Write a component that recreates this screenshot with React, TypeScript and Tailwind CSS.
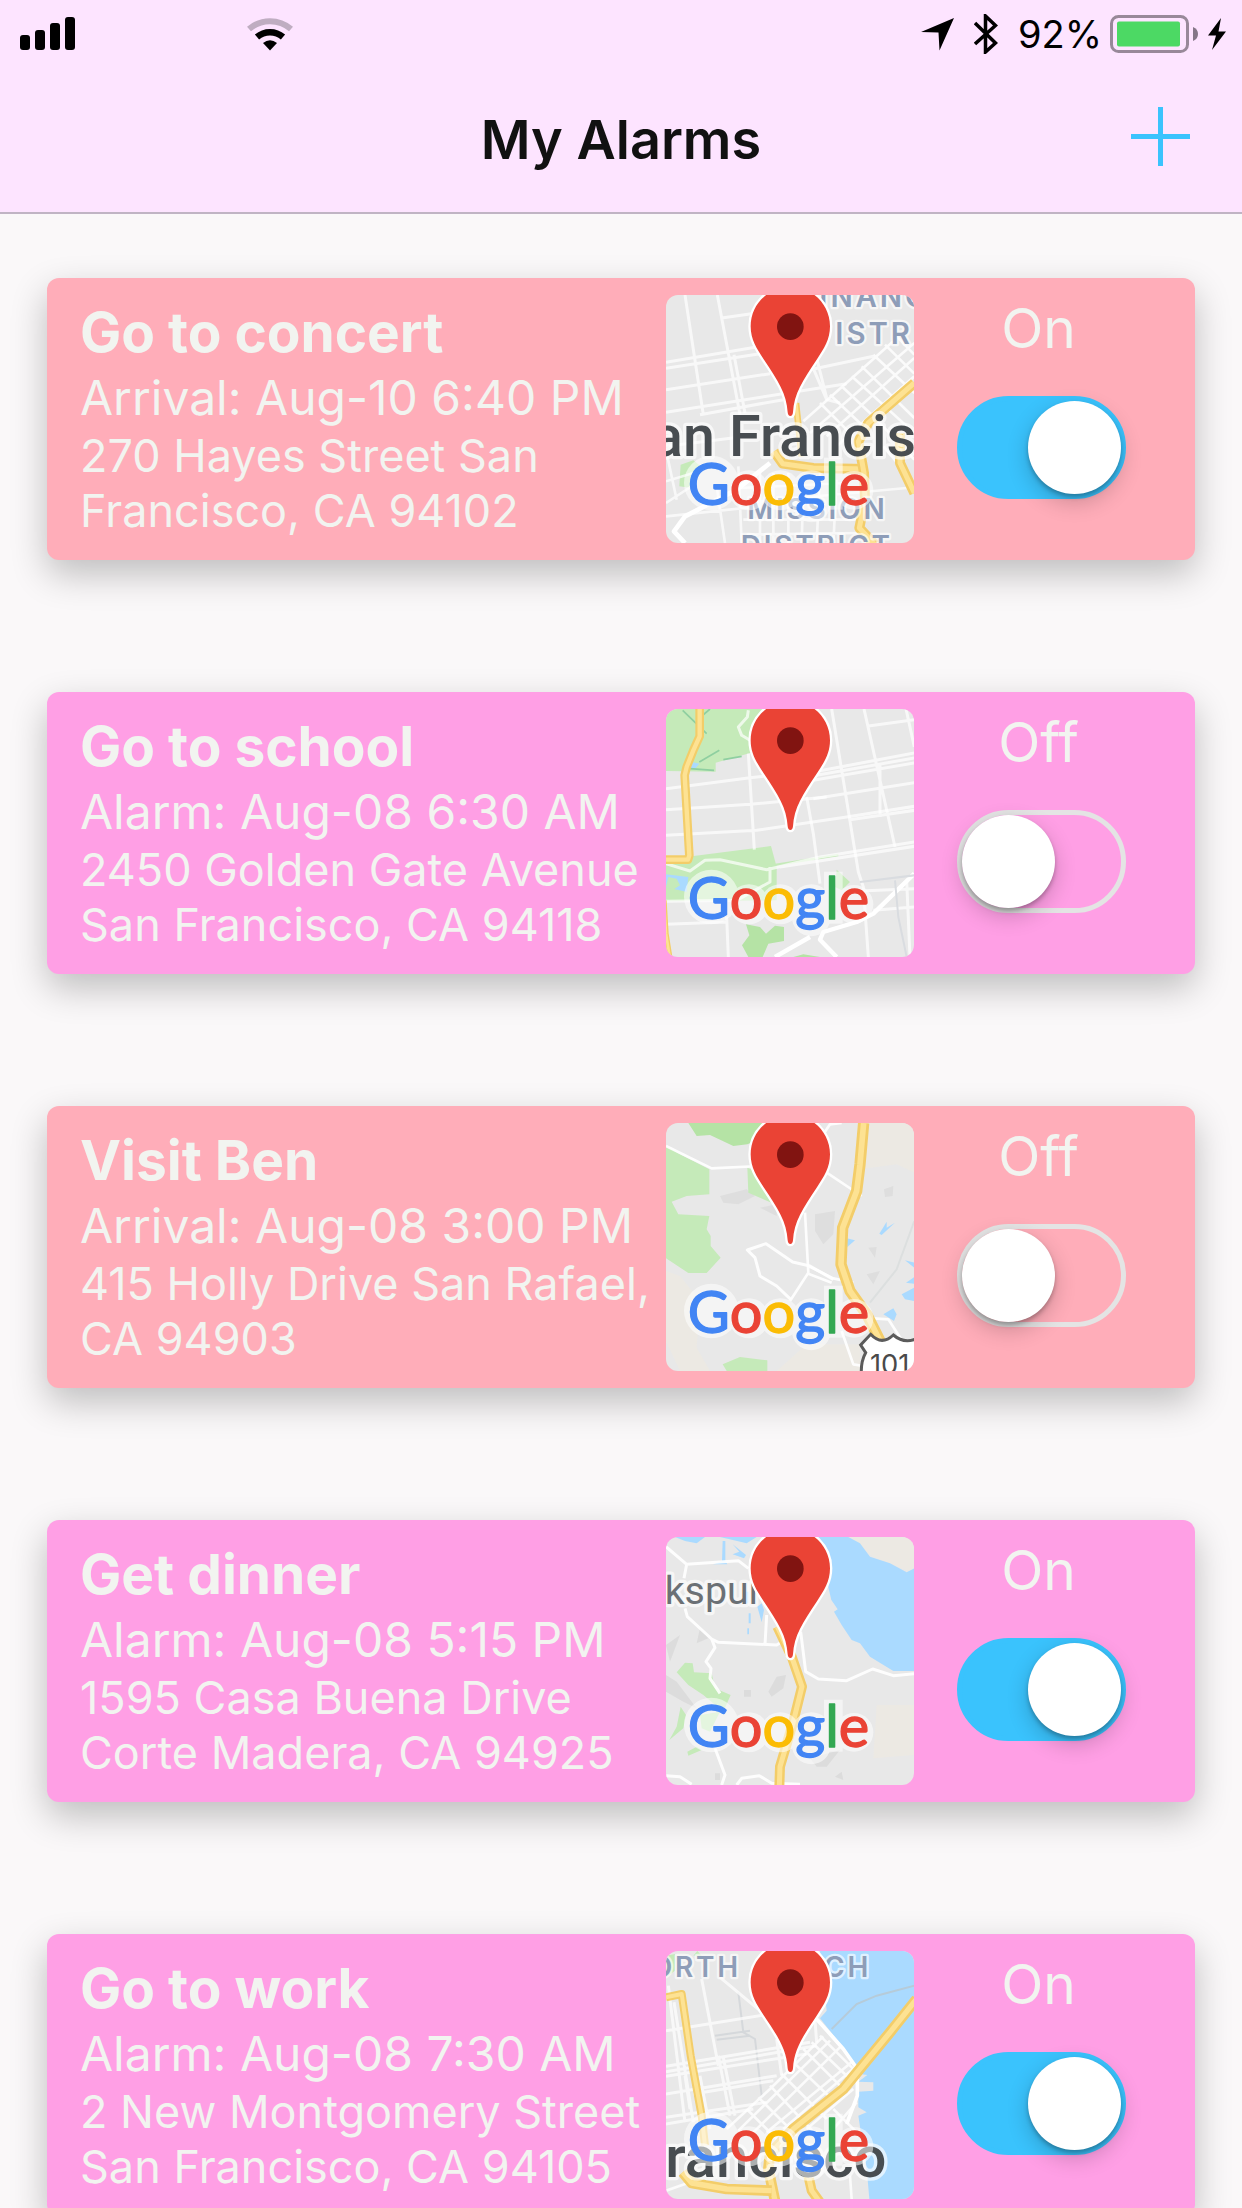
import { useState, type ReactNode } from "react";

interface Alarm {
  id: string;
  title: string;
  time: string;
  address: string[];
  tone: "rose" | "pink";
  on: boolean;
  map: ReactNode;
}

const ROAD = { fill: "none", stroke: "#fff", strokeLinejoin: "round" } as const;

function Highway({ d, width = 30 }: { d: string; width?: number }) {
  return (
    <g fill="none" strokeLinejoin="round">
      <path d={d} stroke="#f3cd69" strokeWidth={width} />
      <path d={d} stroke="#fde293" strokeWidth={width * 0.5} />
    </g>
  );
}

function District({ x, y, size = 84, children }: { x: number; y: number; size?: number; children: string }) {
  return (
    <text
      x={x}
      y={y}
      fontSize={size}
      fontWeight="600"
      fill="#8e9db8"
      stroke="#fff"
      strokeOpacity="0.65"
      strokeWidth="14"
      strokeLinejoin="round"
      paintOrder="stroke"
      className="tracking-widest"
    >
      {children}
    </text>
  );
}

interface CityProps {
  x: number;
  y: number;
  size?: number;
  color?: string;
  weight?: number;
  children: string;
}

function City({ x, y, size = 172, color = "#484d51", weight = 500, children }: CityProps) {
  return (
    <text
      x={x}
      y={y}
      fontFamily="Roboto, sans-serif"
      fontSize={size}
      fontWeight={weight}
      fill={color}
      stroke="#fff"
      strokeOpacity="0.65"
      strokeWidth="20"
      strokeLinejoin="round"
      paintOrder="stroke"
    >
      {children}
    </text>
  );
}

function ConcertMap() {
  return (
    <>
      <path d="M62 535 L100 522 L128 545 L95 605 L58 600Z" fill="#c5eab9" />
      <path
        {...ROAD}
        strokeWidth="9"
        opacity="0.7"
        d="M75 26 L130 385 M172 26 L240 385 M185 95 L290 80 M18 228 L290 182 M18 246 L300 202 M18 310 L330 262 M18 378 L560 292 M120 385 L370 340 M18 480 L260 450 M222 205 L255 380 M440 200 L500 340 L540 350 M450 250 L640 210 M470 215 L500 335"
      />
      <path
        {...ROAD}
        strokeWidth="8"
        opacity="0.8"
        d="M430 405 L700 165 M450 440 L763 170 M500 450 L763 215 M530 480 L763 270 M480 350 L580 450 M510 325 L610 420 M545 300 L640 390 M575 270 L763 440 M605 240 L763 395 M640 205 L763 320 M675 175 L763 262 M710 150 L763 205 M650 400 L763 520 M670 480 L763 590"
      />
      <path
        {...ROAD}
        strokeWidth="8"
        opacity="0.7"
        d="M18 585 L100 560 M18 650 L110 590 M18 690 L300 660 M170 600 L195 770 M235 540 L245 770 M300 560 L300 770 M340 560 L340 770 M385 560 L385 770 M430 600 L425 770 M480 560 L470 770 M530 580 L520 770 M240 605 L560 590 M250 650 L740 605 M250 700 L590 700 M260 745 L600 740 M20 500 L50 640"
      />
      <path {...ROAD} strokeWidth="14" d="M330 530 L230 610 L75 690 L42 735 L75 770" />
      <Highway d="M408 350 L425 510" width={20} />
      <Highway d="M342 495 L368 532 L460 545 L620 548" />
      <Highway d="M763 290 L680 362 L625 410 L595 465 L612 560 L615 640 L598 725 L645 775" />
      <Highway d="M720 440 L720 530 L763 620" />
      <District x={478} y={63} size={88}>INANC</District>
      <District x={526} y={173} size={88}>ISTR</District>
      <District x={262} y={699}>MISSION</District>
      <District x={242} y={809}>DISTRICT</District>
      <City x={-24} y={510}>an Francis</City>
    </>
  );
}

function SchoolMap() {
  return (
    <>
      <path d="M18 26 H345 V140 L300 150 L167 187 V214 L18 212Z" fill="#c5eab9" />
      <path d="M18 492 L95 468 L333 437 L350 500 L350 600 L18 603Z" fill="#c5eab9" />
      <path d="M345 490 L535 460 V468 L345 498Z M530 508 L570 545 L545 570 L525 560Z" fill="#c5eab9" />
      <path d="M258 672 L300 680 L318 700 L345 676 L372 680 V722 L325 730 L308 770 H265 L246 735 L268 705Z M400 770 L430 762 L480 770Z" fill="#b5e3a5" />
      <path d="M18 522 L85 530 L80 575 L18 560Z M95 185 L118 190 L105 205 L90 205Z" fill="#aadaff" />
      <path d="M25 530 L50 535 L60 555 L40 568 L18 560Z" fill="#c5eab9" />
      <path d="M68 30 L140 100 M150 26 L122 50 M118 185 L178 150 M90 205 L162 210 M190 178 L245 168" fill="none" stroke="#8fcfa0" strokeWidth="5" />
      <path
        {...ROAD}
        strokeWidth="9"
        opacity="0.7"
        d="M18 265 L270 232 L380 220 M18 328 L270 312 L500 290 M18 405 L290 390 L560 350 L763 318 M265 160 L283 448 M265 30 L262 50 L235 80 L245 105 L270 120 M18 490 L90 512 L135 480 L180 478 L320 508 L480 470 L763 425 M330 500 V545 L230 600 L18 603 M360 500 L763 438"
      />
      <path
        {...ROAD}
        strokeWidth="9"
        opacity="0.7"
        d="M515 26 L595 515 L610 560 L625 770 M612 26 L705 440 M738 26 L763 140 M620 78 L763 58 M460 215 L763 158 M470 225 L763 173 M460 240 L763 188 M460 295 L763 247 M570 358 L763 330 M660 190 V350 M440 290 L460 400 L480 550 M600 572 L763 565 M640 630 L763 620 M740 540 L750 770 M200 650 L205 770 M18 672 L200 665"
      />
      <path {...ROAD} strokeWidth="13" d="M763 520 L640 640 L590 665 L490 695 L480 718 L530 770 M345 770 L450 710" />
      <path d="M600 545 L763 525 M705 540 L715 650 L740 770" fill="none" stroke="#d9dce0" strokeWidth="6" />
      <Highway d="M119 26 V108 L100 150 L80 200 L74 225 L88 465 L84 478 H18" width={26} />
      <Highway d="M12 600 L18 700 L30 775" width={16} />
    </>
  );
}

function BenMap() {
  return (
    <>
      <path d="M625 26 H763 V175 L710 150 L600 165Z M18 470 L60 485 L120 560 L110 700 L150 770 H60 L18 680Z M440 690 L600 690 V770 H350Z" fill="#ece9e3" />
      <path d="M180 245 L260 225 L285 245 L235 270 L190 265Z M465 300 L525 290 L520 360 L490 390 L465 350Z M300 280 L350 270 L350 305Z M620 480 L660 470 L640 510Z M672 225 L700 215 L698 245 L675 248Z M625 400 L650 398 L645 430Z" fill="#dedede" />
      <path d="M85 26 H320 L300 75 L262 90 L220 95 L150 62 L110 65Z" fill="#b5e3a5" />
      <path d="M18 95 L60 120 L148 165 V240 L80 245 L35 262 L55 300 L148 305 L140 345 L152 365 V395 L182 430 L140 476 L85 476 L18 432Z" fill="#c5eab9" />
      <path d="M262 160 L300 175 L345 270 L265 235Z M188 750 L240 728 L322 738 V770 H200Z" fill="#c5eab9" />
      <path d="M560 372 L585 378 L562 398Z M670 600 L700 582 L710 600 L702 620Z M658 358 L680 322 L680 340 L705 325 L665 362Z M735 438 L763 445 V460Z M738 505 L763 488 V508Z M725 540 L763 520 V560 L735 555Z" fill="#aadaff" />
      <path {...ROAD} strokeWidth="8" opacity="0.9" d="M18 95 L155 162 L300 155 M490 60 L510 30 L545 26 M500 175 L605 245 M435 295 L445 475 L390 560 M445 455 L520 492 L580 505 M445 478 L515 505 M640 612 L685 615 L740 700 M545 650 L580 750 L610 755" />
      <path {...ROAD} strokeWidth="9" opacity="0.9" d="M392 555 L350 515 L300 485 L285 430 L262 407 L318 388 L398 443 L450 455 L520 495" />
      <path d="M763 320 L710 465 L630 565" fill="none" stroke="#dcdfdf" strokeWidth="6" />
      <Highway d="M611 26 L600 150 L590 230 L548 340 L543 450 L570 530 L620 600 L665 690" width={34} />
      <path d="M632 660 Q665 695 700 662 Q735 692 775 670 V790 H605 Q600 745 617 715 L602 692Z" fill="#fff" stroke="#5b5b5b" strokeWidth="9" />
      <text x="630" y="780" fontSize="82" fill="#4a4a4a">101</text>
    </>
  );
}

function DinnerMap() {
  return (
    <>
      <path d="M560 26 H763 V135 L640 85Z M650 530 H763 V680 L640 690Z" fill="#ece9e3" />
      <path d="M470 26 H565 L600 45 L630 85 L690 105 L740 132 L763 120 V428 H700 L630 385 L600 345 L575 335 L545 290 L522 250 L533 243 L514 215Z" fill="#aadaff" />
      <path d="M45 26 H135 L110 45 L75 38Z M180 26 H290 L260 45Z M188 38 H196 V98 L202 108 H160 L186 98Z M218 48 L258 80 L252 90 L218 78 L238 70Z M292 235 L305 225 L312 245 L305 282Z M266 255 H272 V285 H266Z M262 300 H267 V318 H262Z M258 190 H266 V225 H258Z" fill="#aadaff" />
      <path d="M50 432 L75 403 L98 405 L102 432 L155 435 L165 480 L212 500 L190 550 L130 500 L85 470Z M62 535 L78 560 L70 600 L28 635 L50 595Z M82 670 L110 655 L125 665 L85 682Z M120 560 L180 550 L150 610 L125 600Z" fill="#c5eab9" />
      <path d="M18 350 L60 320 L30 400Z M18 440 L50 460 L110 540 L70 520 L18 490Z M325 490 L350 445 L378 440 L370 480 L335 505Z M252 485 H273 V505 H252Z M120 300 L145 330 L110 345Z M165 735 H180 V755 H165Z M525 745 L545 730 L550 755Z M450 690 L540 665 L500 715 L470 715Z" fill="#dcdcdc" />
      <path {...ROAD} strokeWidth="9" opacity="0.9" d="M18 55 L80 108 L235 97 L265 120 M80 108 L72 150 M75 240 L82 265 L155 332 L175 342 L350 350 L375 335 M155 332 L165 358 L138 400 L153 420 L150 450 L180 495 M320 260 L315 350 M422 310 L437 430 L475 452 L560 457 L638 422 L700 442 L763 436 M165 660 L195 740 L185 770 M18 742 L60 745 L95 768 M230 770 L245 750 L298 742 L335 765 L420 768" />
      <Highway d="M352 295 L395 385 L426 475 L400 580 L360 715 L358 775" width={30} />
      <City x={14} y={228} size={118} weight={400} color="#6b7075">kspur</City>
    </>
  );
}

function WorkMap() {
  return (
    <>
      <path d="M480 26 H763 V770 H628 L622 700 L595 520 L620 510 L595 495 V448 L640 445 V420 L595 418 L622 398 L600 395 L580 358 L545 310 L480 228 L500 205Z" fill="#aadaff" />
      <path d="M18 40 L45 35 V85 L18 105Z M100 40 L112 26 L125 40Z" fill="#c5eab9" />
      <path d="M235 150 L250 270 L285 290 L305 460 M165 280 L270 265 M170 292 L270 280" fill="none" stroke="#d5d8db" strokeWidth="6" />
      <path
        {...ROAD}
        strokeWidth="9"
        opacity="0.7"
        d="M18 265 L330 215 M180 105 L300 205 M125 110 L175 370 M25 130 L75 540 M42 180 L100 540 M18 372 L450 300 M18 388 L470 310 M18 402 L440 335 M18 455 L350 400 M100 455 L340 415 M18 525 L320 480 M18 545 L280 500 M175 340 L210 520 M190 345 L225 520 M75 400 L90 500 M350 290 L365 400 M120 400 L150 560 M465 235 L470 300"
      />
      <path
        {...ROAD}
        strokeWidth="8"
        opacity="0.8"
        d="M200 560 L330 440 L490 282 M235 565 L510 295 M280 570 L545 310 M320 570 L580 355 M370 560 L590 370 M430 320 L540 430 M395 355 L510 465 M365 395 L500 530 M330 430 L480 590 M295 465 L410 580 M260 500 L350 590 M455 300 L570 410 M480 280 L600 400 M520 560 L590 480 M440 560 L580 440 M570 700 L575 770 M18 745 L90 720 M520 500 L600 580"
      />
      <path {...ROAD} strokeWidth="11" d="M465 225 L510 275 L550 320 L592 380 V460 L560 545" />
      <path d="M515 260 L590 185 L650 160 L763 130" fill="none" stroke="#b6cbd9" strokeWidth="6" />
      <Highway d="M18 165 L65 155 L92 340 L125 520 L135 610" width={24} />
      <Highway d="M770 170 L690 270 L550 440 L400 560 L330 635 L325 680 L345 775" width={32} />
      <Highway d="M68 690 L95 722 L200 740 L335 745" width={32} />
      <Highway d="M445 700 L455 745 L480 780" />
      <District x={-28} y={104}>ORTH</District>
      <District x={492} y={104}>CH</District>
      <City x={16} y={704} size={174}>rancisco</City>
    </>
  );
}

const GOOGLE_LETTERS = [
  { letter: "G", color: "#4285f4" },
  { letter: "o", color: "#ea4335" },
  { letter: "o", color: "#fbbc05" },
  { letter: "g", color: "#4285f4" },
  { letter: "l", color: "#34a853" },
  { letter: "e", color: "#ea4335" },
];

function GoogleMark() {
  return (
    <>
      <g fill="#fff" opacity="0.55">
        <circle cx="154" cy="590" r="82" />
        <circle cx="267" cy="612" r="60" />
        <circle cx="361" cy="612" r="60" />
        <circle cx="454" cy="612" r="60" />
        <circle cx="454" cy="650" r="58" />
        <rect x="492" y="514" width="56" height="156" />
        <circle cx="582" cy="612" r="58" />
      </g>
      <text
        x="83"
        y="657"
        fontFamily="Lato, sans-serif"
        fontSize="173"
        fontWeight="400"
        strokeWidth="4"
        strokeLinejoin="round"
      >
        {GOOGLE_LETTERS.map((l, i) => (
          <tspan key={i} fill={l.color} stroke={l.color}>
            {l.letter}
          </tspan>
        ))}
      </text>
    </>
  );
}

function MapThumb({ children }: { children: ReactNode }) {
  return (
    <svg
      viewBox="18 26 744 744"
      className="size-[248px] shrink-0 rounded-xl bg-[#e8e8e8] font-[Inter,sans-serif]"
    >
      {children}
      <GoogleMark />
      <path
        d="M272 120 C272 54 325 2 391 2 S510 54 510 120 C510 160 492 187 470 220 C428 283 402 322 399 378 Q398 389 391 389 Q384 389 383 378 C380 322 354 283 312 220 C290 187 272 160 272 120Z"
        fill="#ea4335"
        stroke="#fff"
        strokeWidth="14"
        paintOrder="stroke"
      />
      <circle cx="391" cy="121" r="40" fill="#811411" />
    </svg>
  );
}

const ALARMS: Alarm[] = [
  {
    id: "concert",
    title: "Go to concert",
    time: "Arrival: Aug-10 6:40 PM",
    address: ["270 Hayes Street San", "Francisco, CA 94102"],
    tone: "rose",
    on: true,
    map: <ConcertMap />,
  },
  {
    id: "school",
    title: "Go to school",
    time: "Alarm: Aug-08 6:30 AM",
    address: ["2450 Golden Gate Avenue", "San Francisco, CA 94118"],
    tone: "pink",
    on: false,
    map: <SchoolMap />,
  },
  {
    id: "ben",
    title: "Visit Ben",
    time: "Arrival: Aug-08 3:00 PM",
    address: ["415 Holly Drive San Rafael,", "CA 94903"],
    tone: "rose",
    on: false,
    map: <BenMap />,
  },
  {
    id: "dinner",
    title: "Get dinner",
    time: "Alarm: Aug-08 5:15 PM",
    address: ["1595 Casa Buena Drive", "Corte Madera, CA 94925"],
    tone: "pink",
    on: true,
    map: <DinnerMap />,
  },
  {
    id: "work",
    title: "Go to work",
    time: "Alarm: Aug-08 7:30 AM",
    address: ["2 New Montgomery Street", "San Francisco, CA 94105"],
    tone: "pink",
    on: true,
    map: <WorkMap />,
  },
];

function AlarmCard({ alarm }: { alarm: Alarm }) {
  const [on, setOn] = useState(alarm.on);

  return (
    <li
      className={`flex rounded-xl pl-[33px] text-[#f2f4f0] shadow-[0_14px_36px_rgba(0,0,0,0.24)] ${
        alarm.tone === "rose" ? "bg-[#ffadb9]" : "bg-[#ff9fe5]"
      }`}
    >
      <div className="min-w-0 flex-1 pt-[18px] whitespace-nowrap">
        <h2 className="text-[55px] leading-[72px] font-bold">{alarm.title}</h2>
        <p className="text-[48px] leading-[60px]">{alarm.time}</p>
        <p className="text-[45px] leading-[55px]">
          {alarm.address.map((line) => (
            <span key={line} className="block">
              {line}
            </span>
          ))}
        </p>
      </div>
      <div className="py-[17px]">
        <MapThumb>{alarm.map}</MapThumb>
      </div>
      <div className="flex w-[281px] flex-col items-center gap-[38px] pt-5 pr-[26px]">
        <label htmlFor={alarm.id} className="pr-1.5 text-[55px] leading-[60px]">
          {on ? "On" : "Off"}
        </label>
        <input
          id={alarm.id}
          type="checkbox"
          role="switch"
          checked={on}
          onChange={(e) => setOn(e.target.checked)}
          className="h-[103px] w-[169px] cursor-pointer appearance-none rounded-full border-[5px] border-[#e4e4e4] before:block before:size-[93px] before:rounded-full before:bg-white before:shadow-[0_8px_22px_rgba(0,0,0,0.2),0_3px_4px_rgba(0,0,0,0.25)] before:transition-transform before:content-[''] checked:border-[#3ac3fd] checked:bg-[#3ac3fd] checked:before:translate-x-[66px]"
        />
      </div>
    </li>
  );
}

function StatusBar() {
  return (
    <div className="flex h-[67px] items-center justify-between pr-4 pl-5 text-black">
      <div className="flex items-center gap-[172px]">
        <svg width="55" height="34" viewBox="0 0 55 34">
          <rect x="0" y="18" width="10" height="15" rx="3" />
          <rect x="15" y="13" width="10" height="20" rx="3" />
          <rect x="30" y="6" width="10" height="27" rx="3" />
          <rect x="45" y="0" width="10" height="33" rx="3" />
        </svg>
        <svg width="46" height="34" viewBox="0 0 46 34">
          <path d="M2 12 A32 32 0 0 1 44 12" fill="none" stroke="#bfadc1" strokeWidth="6" />
          <path d="M10 20 A20 20 0 0 1 36 20" fill="none" stroke="#000" strokeWidth="6.5" />
          <path d="M16 26 Q23 20.500 30 26 L23 33.500Z" />
        </svg>
      </div>
      <div className="flex items-center">
        <svg width="33" height="34" viewBox="0 0 33 34" className="mr-5">
          <path d="M33 1 L18.500 33.500 L17.500 15.500 L0 15Z" />
        </svg>
        <svg width="24" height="40" viewBox="0 0 24 40" className="mr-5">
          <path d="M1 9 L21.500 29 L11.500 38 V2 L21.500 11.500 L1 30" fill="none" stroke="#000" strokeWidth="3.5" />
        </svg>
        <span className="mr-2 text-[38px] leading-10">92%</span>
        <svg width="88" height="38" viewBox="0 0 88 38" className="mr-[10px]">
          <rect x="1.500" y="1.500" width="76" height="35" rx="7" fill="none" stroke="#988899" strokeWidth="3" />
          <rect x="7" y="6.500" width="63" height="25" rx="2" fill="#4cd964" />
          <path d="M83 12 Q88 14 88 19 Q88 24 83 26Z" fill="#857688" />
        </svg>
        <svg width="18" height="32" viewBox="0 0 18 32">
          <path d="M13 0 L0 17.500 H8 L4 32 L18 13.500 H10.500Z" />
        </svg>
      </div>
    </div>
  );
}

export default function App() {
  return (
    <div className="flex h-screen flex-col bg-[#faf8f9] font-[Inter,sans-serif]">
      <header className="shrink-0 border-b-2 border-[#c0b4c4] bg-[#fde4ff]">
        <StatusBar />
        <div className="grid h-[145px] grid-cols-[1fr_auto_1fr] items-center">
          <h1 className="col-start-2 text-[54px] leading-[60px] font-semibold text-[#111]">My Alarms</h1>
          <button type="button" aria-label="Add alarm" className="mr-[52px] justify-self-end pb-1.5">
            <svg width="59" height="59" viewBox="0 0 59 59">
              <path d="M29.500 0 V59 M0 29.500 H59" stroke="#3ac3fd" strokeWidth="5" />
            </svg>
          </button>
        </div>
      </header>
      <main className="min-h-0 flex-1 overflow-y-auto [scrollbar-width:none]">
        <ul className="flex flex-col gap-[132px] px-[47px] pt-16 pb-16">
          {ALARMS.map((alarm) => (
            <AlarmCard key={alarm.id} alarm={alarm} />
          ))}
        </ul>
      </main>
    </div>
  );
}
